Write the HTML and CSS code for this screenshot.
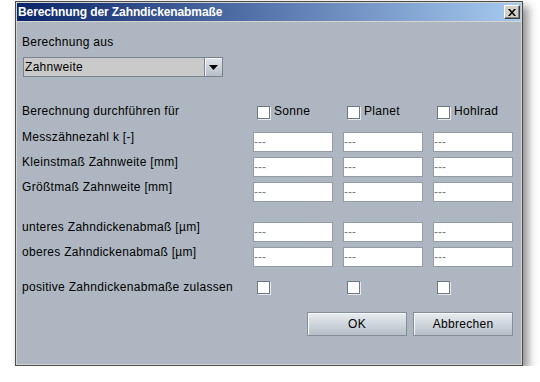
FILE: index.html
```html
<!DOCTYPE html>
<html lang="de">
<head>
<meta charset="utf-8">
<title>Berechnung der Zahndickenabmaße</title>
<link rel="stylesheet" href="styles.css">
</head>
<body>
<div class="window">
  <div class="titlebar">
    <span class="title">Berechnung der Zahndickenabmaße</span>
    <span class="close"><svg width="8" height="7" viewBox="0 0 8 7"><path d="M0 0h2l2 2.5 2-2.5h2L5 3.5 8 7H6L4 4.5 2 7H0l3-3.5z" fill="#000"/></svg></span>
  </div>
  <div class="content">
    <div class="lbl-top">Berechnung aus</div>
    <div class="combo">
      <span class="combo-text">Zahnweite</span>
      <span class="combo-btn"><svg width="9" height="5" viewBox="0 0 9 5"><path d="M0 0h9L4.5 5z" fill="#000"/></svg></span>
    </div>

    <div class="row row-check">
      <span class="lbl">Berechnung durchführen für</span>
      <span class="cb"><span class="box"></span>Sonne</span>
      <span class="cb"><span class="box"></span>Planet</span>
      <span class="cb"><span class="box"></span>Hohlrad</span>
    </div>

    <div class="row row-field first">
      <span class="lbl">Messzähnezahl k [-]</span>
      <span class="field">---</span><span class="field">---</span><span class="field">---</span>
    </div>
    <div class="row row-field">
      <span class="lbl">Kleinstmaß Zahnweite [mm]</span>
      <span class="field">---</span><span class="field">---</span><span class="field">---</span>
    </div>
    <div class="row row-field">
      <span class="lbl">Größtmaß Zahnweite [mm]</span>
      <span class="field">---</span><span class="field">---</span><span class="field">---</span>
    </div>

    <div class="row row-field group">
      <span class="lbl">unteres Zahndickenabmaß [µm]</span>
      <span class="field">---</span><span class="field">---</span><span class="field">---</span>
    </div>
    <div class="row row-field">
      <span class="lbl">oberes Zahndickenabmaß [µm]</span>
      <span class="field">---</span><span class="field">---</span><span class="field">---</span>
    </div>

    <div class="row row-pos">
      <span class="lbl">positive Zahndickenabmaße zulassen</span>
      <span class="cb"><span class="box"></span></span>
      <span class="cb"><span class="box"></span></span>
      <span class="cb"><span class="box"></span></span>
    </div>

    <div class="buttons">
      <span class="btn">OK</span>
      <span class="btn">Abbrechen</span>
    </div>
  </div>
</div>
</body>
</html>
```
FILE: styles.css
```css
html, body {
  margin: 0;
  background: #ffffff;
}
body {
  font-family: "Liberation Sans", Arial, sans-serif;
  font-size: 12px;
  color: #000;
}
.window {
  margin: 1px 0 0 15px;
  width: 504px;
  height: 361px;
  border: 1px solid #4b4b4b;
  padding: 1px;
  background: #d6d3cc;
  box-shadow: 5px 5px 9px rgba(0, 0, 0, 0.45);
  display: flex;
  flex-direction: column;
}
.titlebar {
  height: 18px;
  display: flex;
  align-items: center;
  background: linear-gradient(to right, #0a246a, #a6caf0);
  margin-bottom: 1px;
  padding-left: 1px;
}
.title {
  color: #fff;
  font-weight: bold;
  font-size: 12px;
  line-height: 18px;
  letter-spacing: -0.1px;
  white-space: nowrap;
}
.close {
  margin-left: auto;
  margin-right: 1px;
  width: 16px;
  height: 14px;
  box-sizing: border-box;
  background: #d4d0c8;
  border-top: 1px solid #fff;
  border-left: 1px solid #fff;
  border-right: 1px solid #404040;
  border-bottom: 1px solid #404040;
  box-shadow: inset -1px -1px 0 #808080;
  display: flex;
  align-items: center;
  justify-content: center;
}
.content {
  flex: 1;
  background: #aeb7c1;
  padding-left: 5px;
  letter-spacing: 0.3px;
}
.lbl-top {
  margin-top: 13px;
  line-height: 15px;
}
.combo {
  margin-top: 7px;
  margin-left: 1px;
  width: 200px;
  height: 20px;
  box-sizing: border-box;
  border: 1px solid #7a828b;
  background: #cacaca;
  display: flex;
}
.combo-text {
  flex: 1;
  line-height: 18px;
  padding-left: 1px;
}
.combo-btn {
  width: 17px;
  border-left: 1px solid #7a828b;
  background: linear-gradient(#e3e7ec, #b6bec7);
  box-shadow: inset 1px 1px 0 #f2f4f6;
  display: flex;
  align-items: center;
  justify-content: center;
}
.row {
  display: grid;
  grid-template-columns: 221px 80px 80px 80px;
  column-gap: 10px;
  align-items: start;
}
.lbl {
  line-height: 15px;
  white-space: nowrap;
}
.row-check {
  margin-top: 27px;
}
.cb {
  display: flex;
  align-items: flex-start;
  gap: 4px;
  padding-left: 4px;
  line-height: 15px;
}
.box {
  width: 13px;
  height: 13px;
  box-sizing: border-box;
  background: #fff;
  border: 1px solid #6e7680;
  box-shadow: 1px 1px 0 #e6eaee;
  margin-top: 2px;
  flex: none;
}
.row-field {
  margin-top: 5px;
}
.row-field.first {
  margin-top: 13px;
}
.row-field.group {
  margin-top: 20px;
}
.row-field .lbl {
  margin-top: -2px;
}
.field {
  height: 20px;
  box-sizing: border-box;
  border: 1px solid #939ba4;
  background: #fff;
  color: #808080;
  line-height: 18px;
  letter-spacing: 0;
}
.row-pos {
  margin-top: 13px;
}
.row-pos .box {
  margin-top: 1px;
}
.buttons {
  margin-top: 17px;
  width: 491px;
  display: flex;
  justify-content: flex-end;
  gap: 6px;
}
.btn {
  width: 100px;
  height: 24px;
  box-sizing: border-box;
  border: 1px solid #858e98;
  background: linear-gradient(#e8ecf0, #b6bfc8);
  box-shadow: inset 1px 1px 0 #f7f9fa;
  display: flex;
  align-items: center;
  justify-content: center;
}
```
